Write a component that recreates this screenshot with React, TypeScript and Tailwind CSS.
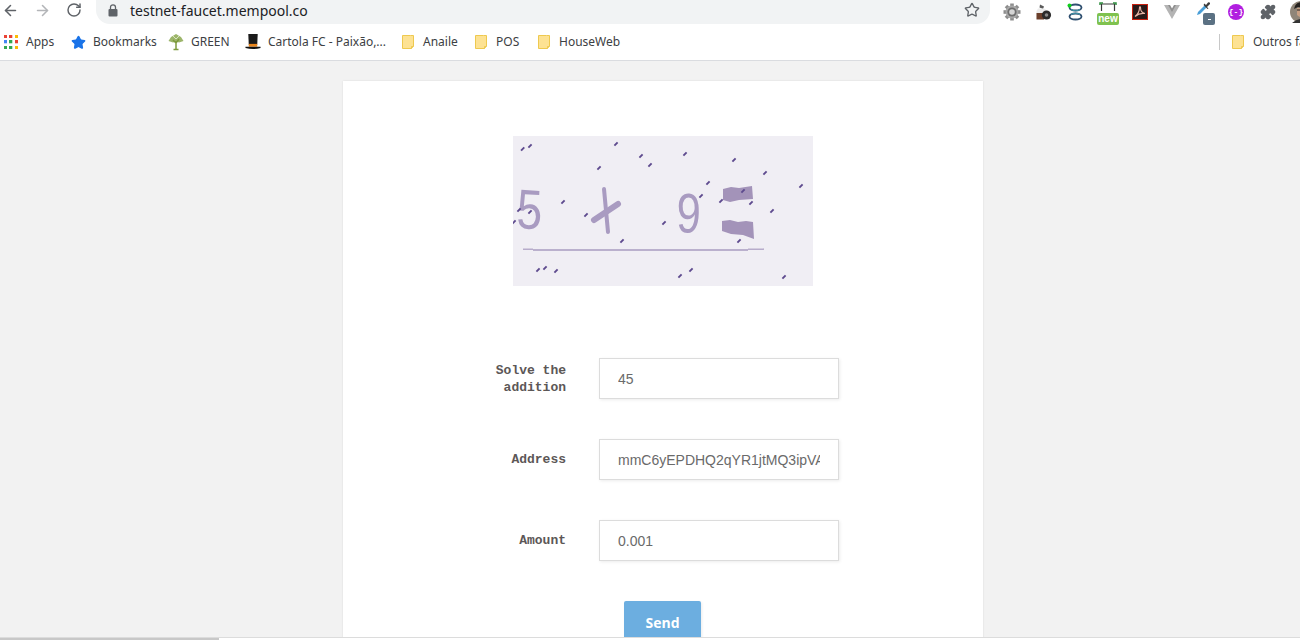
import React from "react";
import { ArrowLeft, ArrowRight, RotateCw, Star, Puzzle } from "lucide-react";

const dots: [number, number][] = [
  [53, 54], [75, 45], [333, 39], [408, 75], [435, 102], [540, 69], [687, 87], [780, 126], [282, 111], [609, 156],
  [888, 165], [588, 195], [714, 180], [648, 210], [738, 216], [174, 213], [42, 237], [75, 243], [243, 252], [801, 240],
  [27, 273], [477, 276], [351, 330], [702, 330], [99, 417], [120, 411], [153, 420], [525, 435], [558, 417], [837, 438],
];

function Captcha() {
  return (
    <svg width="300" height="150" viewBox="0 0 300 150" className="block">
      <rect width="300" height="150" fill="#f0eef4" />
      <g fill="#a99bc1" fontFamily="Liberation Sans, sans-serif">
        <text x="0" y="0" fontSize="56" transform="translate(3 92) scale(0.82 1) rotate(3)">5</text>
        <text x="0" y="0" fontSize="56" transform="translate(163 96) scale(0.78 1) rotate(2)">9</text>
      </g>
      <g stroke="#a99bc1" strokeLinecap="round" fill="none">
        <path d="M91 53 L95 96" strokeWidth="4" />
        <path d="M81 84 L105 68" strokeWidth="6" />
      </g>
      <g fill="#a393b9">
        <path d="M210 53 L218 51 L226 52 L239 50 L240 63 L226 64 L217 66 L210 64 Z" />
        <path d="M209 85 L217 84 L225 86 L233 85 L240 86 L241 103 L230 99 L218 98 L209 95 Z" />
      </g>
      <g stroke="#a99bc1" fill="none">
        <path d="M10 113.2 H20" strokeWidth="1.2" />
        <path d="M20 114 H235" strokeWidth="1.6" />
        <path d="M235 113.2 H251" strokeWidth="1.2" />
      </g>
      <g stroke="#5d4a8e" strokeWidth="1.9" strokeLinecap="butt">
        {dots.map(([x, y], i) => {
          const cx = x / 3 - 8;
          const cy = y / 3 - 5;
          return <line key={i} x1={cx - 1.6} y1={cy + 1.6} x2={cx + 1.6} y2={cy - 1.6} />;
        })}
      </g>
    </svg>
  );
}

function Folder() {
  return (
    <svg width="16" height="16" viewBox="0 0 16 16">
      <path d="M2.5 1.5 H10.5 L13.5 1.5 V12 L11.5 14.5 H2.5 Z" fill="#fde293" stroke="#eec94f" strokeWidth="1" />
      <path d="M11.5 14.5 V12.5 H13.5" fill="none" stroke="#eec94f" strokeWidth="1" />
    </svg>
  );
}

function AppsIcon() {
  const colors = ["#ea4335", "#ea4335", "#fbbc05", "#4285f4", "#34a853", "#ea4335", "#34a853", "#34a853", "#fbbc05"];
  return (
    <div className="grid grid-cols-3 gap-[2px] w-[14px]">
      {colors.map((c, i) => (
        <svg key={i} width="3.3" height="3.3" viewBox="0 0 4 4" className="block">
          <rect width="4" height="4" fill={c} />
        </svg>
      ))}
    </div>
  );
}

function TreeIcon() {
  return (
    <svg width="16" height="18" viewBox="0 0 16 18">
      <path d="M8 1 L13 4 L15.5 8 L11 9.5 L8.5 8.5 L5 9.5 L0.5 8 L3 4 Z" fill="#9cb56a" />
      <path d="M8 8 V16 M5.5 16.5 H10.5 M8 10 L5 7 M8 10 L11 6" stroke="#7e9a3e" strokeWidth="1.5" fill="none" />
      <path d="M5 3 L8 6 L11 3" stroke="#dfe8c9" strokeWidth="0.9" fill="none" />
    </svg>
  );
}

function HatIcon() {
  return (
    <svg width="17" height="18" viewBox="0 0 17 18">
      <path d="M3.5 0.5 H13.5 L13 12 H4 Z" fill="#1a1a1a" />
      <rect x="4" y="11" width="9" height="3" fill="#e8841a" />
      <path d="M0.5 14 H16.5 V15.5 Q8.5 17.5 0.5 15.5 Z" fill="#111" />
    </svg>
  );
}

function Bookmark({ icon, label, className }: { icon: React.ReactNode; label: string; className: string }) {
  return (
    <div className={`flex items-center gap-[7px] shrink-0 ${className}`}>
      <div className="w-4 h-4 flex items-center justify-center shrink-0">{icon}</div>
      <span className="whitespace-nowrap text-[12px] text-[#3c4043] font-['Noto_Sans',sans-serif]">{label}</span>
    </div>
  );
}

function Gear() {
  const teeth = [0, 45, 90, 135, 180, 225, 270, 315];
  return (
    <svg width="18" height="18" viewBox="0 0 18 18">
      <g fill="#8d8d8d">
        {teeth.map((a) => (
          <rect key={a} x="7.2" y="0.5" width="3.6" height="4" transform={`rotate(${a} 9 9)`} />
        ))}
      </g>
      <circle cx="9" cy="9" r="6.4" fill="#a8a8a8" />
      <circle cx="9" cy="9" r="4.6" fill="#6e6e6e" />
      <circle cx="9" cy="9" r="2.8" fill="#d5d5d5" />
    </svg>
  );
}

function Coffee() {
  return (
    <svg width="18" height="18" viewBox="0 0 18 18">
      <path d="M5 1.5 L9 3.5 L8 6 L4.5 4.5 Z" fill="#5b5b5b" />
      <path d="M3 5.5 L9 5.5 L13 8 V16 H1.5 V8 Z" fill="#ececec" />
      <path d="M1.5 10 H9 V16.5 H1.5 Z" fill="#6b3f2a" />
      <circle cx="11.5" cy="12" r="4.6" fill="#2b2b2b" />
      <circle cx="11.5" cy="12" r="1.8" fill="#8a8a8a" />
    </svg>
  );
}

function Hourglass() {
  return (
    <svg width="18" height="18" viewBox="0 0 18 18">
      <ellipse cx="9.5" cy="4.5" rx="6" ry="3" fill="none" stroke="#2f4f6f" strokeWidth="1.8" />
      <ellipse cx="9.5" cy="13.5" rx="6" ry="3" fill="none" stroke="#2f4f6f" strokeWidth="1.8" />
      <path d="M5 6.5 Q9.5 9 14 6.5 M5 11.5 Q9.5 9 14 11.5" stroke="#3f94a8" strokeWidth="1.2" fill="none" />
      <circle cx="3.5" cy="2.5" r="2" fill="#10d01a" />
    </svg>
  );
}

function NewIcon() {
  return (
    <div className="relative w-[22px] h-[22px]">
      <svg width="22" height="12" viewBox="0 0 22 12" className="block">
        <path d="M4.5 10 V3 H17.5 V10" fill="none" stroke="#3a3a3a" strokeWidth="1.2" />
        <path d="M3 4 V2 H6 M16 2 H19 V4" fill="none" stroke="#2f8f3f" strokeWidth="1.5" />
      </svg>
      <div className="absolute left-0 top-[12px] w-[22px] h-[12px] rounded-[2px] bg-[#7fc24f] text-white text-[10px] leading-[12px] font-bold text-center font-['Liberation_Sans',sans-serif]">
        new
      </div>
    </div>
  );
}

function PdfIcon() {
  return (
    <svg width="16" height="16" viewBox="0 0 16 16">
      <rect x="0.5" y="0.5" width="15" height="15" fill="#2a1a1a" stroke="#c8200f" />
      <path d="M3 12.5 C5.5 10.5 7.5 6.5 7.5 3.5 C7.5 2.5 8.5 2.5 8.5 3.5 C8.5 6.5 10 9 13 9.5 C10 9 6 10 3 12.5 Z" fill="none" stroke="#e9b7a8" strokeWidth="1.1" />
    </svg>
  );
}

function VueIcon() {
  return (
    <svg width="16" height="14" viewBox="0 0 16 14">
      <path d="M0 0 H5 L8 5 L11 0 H16 L8 14 Z" fill="#b4b4b4" />
      <path d="M4 0 H6 L8 3.5 L10 0 H12 L8 7 Z" fill="#8f8f8f" />
    </svg>
  );
}

function Dropper() {
  return (
    <div className="relative w-[22px] h-[22px]">
      <svg width="16" height="16" viewBox="0 0 16 16" className="block ml-[1px]">
        <path d="M2 14 L3 11 L10 4 L12 6 L5 13 Z" fill="#4a9fd8" />
        <path d="M9.5 2.5 L11 4 L13 1.5 Q14.5 1 15 2 Q15.5 3 14 4 L12 6 L13.5 7.5 L12.5 8 L8.5 4 Z" fill="#3c3c3c" />
      </svg>
      <div className="absolute left-[9px] top-[12px] w-3 h-3 rounded-[2px] bg-[#5b7183] flex items-center justify-center">
        <div className="w-[3px] h-px bg-white" />
      </div>
    </div>
  );
}

function PurpleIcon() {
  return (
    <div className="w-4 h-4 rounded-full bg-[#b11ee0] flex items-center justify-center text-[8px] leading-none text-white font-bold font-['Liberation_Mono',monospace]">
      {"{-}"}
    </div>
  );
}

function Avatar() {
  return (
    <svg width="22" height="22" viewBox="0 0 22 22">
      <circle cx="11" cy="11" r="11" fill="#8f8578" />
      <path d="M4 8 Q5 1 12 1 Q20 2 20 10 L17 7 L8 6 Z" fill="#26221f" />
      <path d="M7 7 H17 V14 Q12 19 7 14 Z" fill="#c79f83" />
      <path d="M7 9 H11 M13 9 H17" stroke="#222" strokeWidth="1.2" />
      <path d="M2 22 Q11 14 20 22 Z" fill="#333" />
    </svg>
  );
}

function Ext({ children, className }: { children: React.ReactNode; className: string }) {
  return <div className={`flex items-center justify-center shrink-0 h-6 ${className}`}>{children}</div>;
}

function Field({ label, value, labelClass }: { label: React.ReactNode; value: string; labelClass?: string }) {
  return (
    <div className="flex items-center">
      <label className={`w-[80px] text-right text-[13px] leading-[17px] font-bold text-[#5c5757] font-['Liberation_Mono',monospace] ${labelClass ?? ""}`}>
        {label}
      </label>
      <input
        readOnly
        value={value}
        className="ml-[33px] w-[240px] h-[41px] px-[18px] bg-white border border-[#dcdcdc] shadow-[1px_1px_3px_rgba(0,0,0,0.08)] text-[14px] text-[#6a6a6a] outline-none font-['Liberation_Sans',sans-serif]"
      />
    </div>
  );
}

export default function App() {
  return (
    <div className="w-[1300px] h-[640px] overflow-hidden flex flex-col bg-[#f2f2f2]">
      <div className="h-6 shrink-0 bg-white flex items-start">
        <div className="w-[96px] h-5 flex items-center shrink-0">
          <ArrowLeft className="ml-[2px] w-[17px] h-[17px] text-[#5f6368]" strokeWidth={2.2} />
          <ArrowRight className="ml-[15px] w-[17px] h-[17px] text-[#b3b5b8]" strokeWidth={2.2} />
          <RotateCw className="ml-[15px] w-[16px] h-[16px] text-[#5f6368]" strokeWidth={2.2} />
        </div>
        <div className="w-[894px] h-6 shrink-0 rounded-br-[14px] rounded-bl-[14px] bg-[#f1f3f4] flex items-center pb-[4px]">
          <svg width="10" height="13" viewBox="0 0 10 13" className="ml-[12px] shrink-0">
            <rect x="0.5" y="5" width="9" height="7.5" rx="1" fill="#5f6368" />
            <path d="M2.5 5 V3.3 a2.5 2.5 0 0 1 5 0 V5" fill="none" stroke="#5f6368" strokeWidth="1.3" />
          </svg>
          <span className="ml-[12px] text-[14px] text-[#202124] font-['Noto_Sans',sans-serif] whitespace-nowrap">testnet-faucet.mempool.co</span>
          <Star className="ml-auto mr-[10px] w-[16px] h-[16px] text-[#5f6368]" strokeWidth={2} />
        </div>
        <div className="flex items-start h-5">
          <Ext className="w-[44px]"><Gear /></Ext>
          <Ext className="w-[20px]"><Coffee /></Ext>
          <Ext className="w-[42px]"><Hourglass /></Ext>
          <Ext className="w-[24px]"><NewIcon /></Ext>
          <Ext className="w-[40px]"><PdfIcon /></Ext>
          <Ext className="w-[24px]"><VueIcon /></Ext>
          <Ext className="w-[42px]"><Dropper /></Ext>
          <Ext className="w-[20px]"><PurpleIcon /></Ext>
          <Ext className="w-[44px]">
            <Puzzle className="w-4 h-4 text-[#5f6368] fill-[#5f6368]" />
          </Ext>
          <Ext className="w-[12px]"><div className="ml-[10px]"><Avatar /></div></Ext>
        </div>
      </div>

      <div className="h-[37px] shrink-0 bg-white border-b border-[#dadce0] flex items-center pl-[3px] overflow-hidden">
        <Bookmark className="w-[67px]" icon={<AppsIcon />} label="Apps" />
        <Bookmark
          className="w-[98px]"
          icon={<Star className="w-[15px] h-[15px] text-[#1a73e8] fill-[#1a73e8]" />}
          label="Bookmarks"
        />
        <Bookmark className="w-[77px]" icon={<TreeIcon />} label="GREEN" />
        <Bookmark className="w-[155px]" icon={<HatIcon />} label="Cartola FC - Paixão,..." />
        <Bookmark className="w-[73px]" icon={<Folder />} label="Anaile" />
        <Bookmark className="w-[63px]" icon={<Folder />} label="POS" />
        <Bookmark className="w-[80px]" icon={<Folder />} label="HouseWeb" />
        <div className="ml-auto w-[81px] shrink-0 flex items-center overflow-hidden">
          <div className="w-px h-4 bg-[#c8c8c8] mr-[10px] shrink-0" />
          <Bookmark className="" icon={<Folder />} label="Outros favoritos" />
        </div>
      </div>

      <main className="flex-1 min-h-0 overflow-hidden flex justify-center pl-[26px] pt-5">
        <div className="w-[640px] h-[600px] shrink-0 bg-white shadow-[0_0_2px_rgba(0,0,0,0.1)] pt-[55px] flex flex-col items-center">
          <Captcha />
          <div className="mt-[72px] w-[353px] ml-[-1px] flex flex-col gap-10">
            <Field label="Solve the addition" value="45" />
            <Field label="Address" value="mmC6yEPDHQ2qYR1jtMQ3ipVAhKqZ8nTfLw" />
            <Field label="Amount" value="0.001" />
          </div>
          <button className="mt-10 ml-[-1px] w-[77px] h-[42px] shrink-0 rounded-[2px] bg-[#6caee0] text-white text-[14px] font-bold font-['Open_Sans',sans-serif] shadow-[1px_1px_3px_rgba(0,0,0,0.08)]">
            Send
          </button>
        </div>
      </main>

      <div className="h-[3px] shrink-0 bg-white border-t border-[#dcdcdc] flex">
        <div className="w-[219px] bg-[#c8c8c8]" />
      </div>
    </div>
  );
}
